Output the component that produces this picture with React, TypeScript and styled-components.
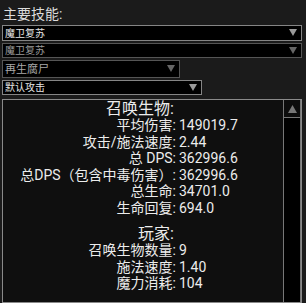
import React from "react";
import styled, { createGlobalStyle } from "styled-components";

const Global = createGlobalStyle`
  html, body { margin: 0; padding: 0; background: #1b1b1b; overflow: hidden; }
  body { font-family: Roboto, "Noto Sans CJK SC", sans-serif; }
`;

const Page = styled.div`
  width: 306px;
  height: 303px;
  padding: 6px 0 0 2px;
  box-sizing: border-box;
  display: flex;
  flex-direction: column;
  align-items: flex-start;
`;

const Title = styled.div`
  font-size: 14px;
  line-height: 17px;
  color: #dcdcdc;
  padding-left: 1px;
  margin-bottom: 2px;
`;

const Select = styled.div<{ $width: number; $border: string; $tall?: boolean }>`
  width: ${(p) => p.$width}px;
  height: ${(p) => (p.$tall ? 18 : 16)}px;
  box-sizing: border-box;
  border: 1px solid ${(p) => p.$border};
  background: #000;
  display: flex;
  align-items: center;
  justify-content: space-between;
  padding: 0 4px 0 2px;
  margin-bottom: 2px;
`;

const SelectText = styled.span<{ $color: string; $size: number }>`
  color: ${(p) => p.$color};
  font-size: ${(p) => p.$size}px;
  line-height: 1;
  font-family: "Noto Sans CJK SC", sans-serif;
`;

const Arrow = ({ color }: { color: string }) => (
  <svg width="8" height="7" viewBox="0 0 8 7">
    <polygon points="0,0 8,0 4,7" fill={color} />
  </svg>
);

const Panel = styled.div`
  margin-top: 2px;
  width: 300px;
  height: 210px;
  box-sizing: border-box;
  border: 1px solid #8a8a8a;
  background: #0f0f0f;
  display: flex;
`;

const Content = styled.div`
  flex: 1;
  display: grid;
  grid-template-columns: 173px 1fr;
  column-gap: 3px;
  align-content: start;
  color: #ececec;
`;

const Heading = styled.div<{ $gap?: number }>`
  grid-column: 1;
  justify-self: end;
  font-size: 16px;
  line-height: 17px;
  padding-right: 2px;
  margin-top: ${(p) => p.$gap || 0}px;
`;

const Label = styled.div`
  grid-column: 1;
  justify-self: end;
  font-size: 14px;
  line-height: 16.5px;
  white-space: nowrap;
`;

const Value = styled.div`
  grid-column: 2;
  font-size: 14px;
  line-height: 16.5px;
  white-space: nowrap;
`;

const Scrollbar = styled.div`
  width: 18px;
  box-sizing: border-box;
  border-left: 1px solid #777;
  border-right: 1px solid #777;
  background: #000;
  display: flex;
  flex-direction: column;
`;

const ScrollButton = styled.div`
  height: 18px;
  box-sizing: border-box;
  border-bottom: 1px solid #777;
  background: #0c0c0c;
  display: flex;
  align-items: center;
  justify-content: center;
`;

const minion: [string, string][] = [
  ["平均伤害:", "149019.7"],
  ["攻击/施法速度:", "2.44"],
  ["总 DPS:", "362996.6"],
  ["总DPS（包含中毒伤害）:", "362996.6"],
  ["总生命:", "34701.0"],
  ["生命回复:", "694.0"],
];

const player: [string, string][] = [
  ["召唤生物数量:", "9"],
  ["施法速度:", "1.40"],
  ["魔力消耗:", "104"],
];

export default function App() {
  return (
    <>
      <Global />
      <Page>
        <Title>主要技能:</Title>
        <Select $width={300} $border="#858585">
          <SelectText $color="#e6e6e6" $size={10}>魔卫复苏</SelectText>
          <Arrow color="#9a9a9a" />
        </Select>
        <Select $width={300} $border="#555">
          <SelectText $color="#9a9a9a" $size={10}>魔卫复苏</SelectText>
          <Arrow color="#666" />
        </Select>
        <Select $width={178} $border="#555" $tall>
          <SelectText $color="#a8a8a8" $size={11}>再生腐尸</SelectText>
          <Arrow color="#666" />
        </Select>
        <Select $width={200} $border="#858585">
          <SelectText $color="#e6e6e6" $size={10}>默认攻击</SelectText>
          <Arrow color="#9a9a9a" />
        </Select>
        <Panel>
          <Content>
            <Heading>召唤生物:</Heading>
            {minion.map(([l, v]) => (
              <React.Fragment key={l}>
                <Label>{l}</Label>
                <Value>{v}</Value>
              </React.Fragment>
            ))}
            <Heading $gap={9}>玩家:</Heading>
            {player.map(([l, v]) => (
              <React.Fragment key={l}>
                <Label>{l}</Label>
                <Value>{v}</Value>
              </React.Fragment>
            ))}
          </Content>
          <Scrollbar>
            <ScrollButton>
              <svg width="9" height="8" viewBox="0 0 9 8">
                <polygon points="4.5,0 9,8 0,8" fill="#777" />
              </svg>
            </ScrollButton>
          </Scrollbar>
        </Panel>
      </Page>
    </>
  );
}
